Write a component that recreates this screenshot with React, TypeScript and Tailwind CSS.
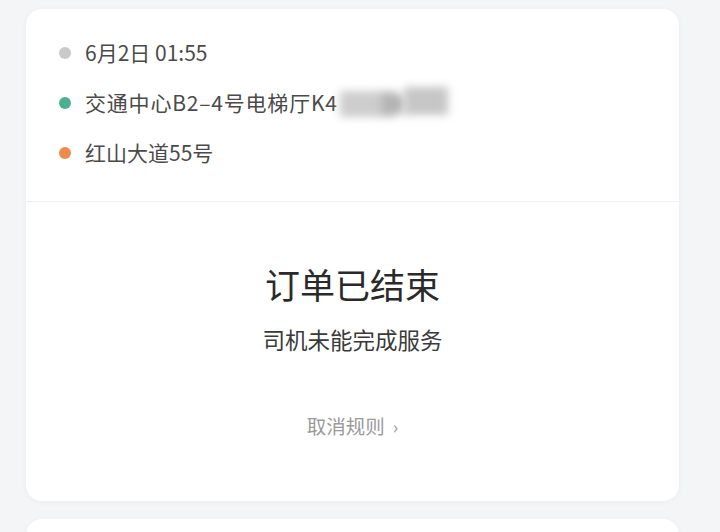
import React from "react";

export default function App() {
  const font = { fontFamily: '"Noto Sans CJK SC", "Noto Sans", sans-serif' };
  return (
    <div className="w-[720px] h-[532px] overflow-hidden bg-[#f4f5f7] pl-[26px] pr-[41px] pt-[9px]" style={font}>
      <div className="bg-white rounded-[16px] shadow-[0_1px_6px_rgba(0,0,0,0.04)]">
        <div className="pt-[19px] pb-[23px] pl-[33px] border-b border-[#f0f0f0]">
          <div className="flex items-center h-[50px] gap-[14px]">
            <span className="w-[12px] h-[12px] rounded-full bg-[#cacaca]" />
            <span className="text-[21px] text-[#4a4a4a]">6月2日 01:55</span>
          </div>
          <div className="flex items-center h-[50px] gap-[14px]">
            <span className="w-[12px] h-[12px] rounded-full bg-[#4caf8e]" />
            <span className="text-[21px] text-[#4a4a4a] flex items-center tracking-[0.8px]">
              交通中心B2–4号电梯厅K4
              <span className="relative inline-block w-[110px] h-[36px] ml-[2px]">
                <span className="absolute left-0 top-[6px] w-[56px] h-[26px] bg-[#cdcdcd] blur-[4px]" />
                <span className="absolute left-[42px] top-[10px] w-[22px] h-[18px] bg-[#b2b2b2] blur-[4px]" />
                <span className="absolute left-[64px] top-[2px] w-[44px] h-[28px] bg-[#c6c6c6] blur-[4px]" />
              </span>
            </span>
          </div>
          <div className="flex items-center h-[50px] gap-[14px]">
            <span className="w-[12px] h-[12px] rounded-full bg-[#ee8b4c]" />
            <span className="text-[21px] text-[#4a4a4a]">红山大道55号</span>
          </div>
        </div>
        <div className="h-[299px] flex flex-col items-center pt-[56px]">
          <div className="text-[35px] leading-[52px] text-[#2a2a2a]">订单已结束</div>
          <div className="mt-[12px] text-[22.5px] leading-[34px] text-[#3a3a3a]">司机未能完成服务</div>
          <div className="mt-[55px] text-[19.5px] leading-[30px] text-[#9a9a9a] flex items-center gap-[8px]">
            取消规则<span className="text-[18px]">›</span>
          </div>
        </div>
      </div>
      <div className="mt-[18px] bg-white rounded-[16px] h-[40px] shadow-[0_1px_6px_rgba(0,0,0,0.04)]" />
    </div>
  );
}
